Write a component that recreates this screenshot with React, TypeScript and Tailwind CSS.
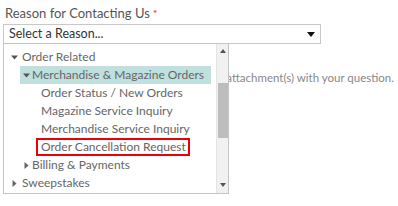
import React from 'react';

type Item = {
  label: string;
  level: 1 | 2 | 3;
  arrow?: 'down' | 'right';
  active?: boolean;
  boxed?: boolean;
};

const items: Item[] = [
  { label: 'Order Related', level: 1, arrow: 'down' },
  { label: 'Merchandise & Magazine Orders', level: 2, arrow: 'down', active: true },
  { label: 'Order Status / New Orders', level: 3 },
  { label: 'Magazine Service Inquiry', level: 3 },
  { label: 'Merchandise Service Inquiry', level: 3 },
  { label: 'Order Cancellation Request', level: 3, boxed: true },
  { label: 'Billing & Payments', level: 2, arrow: 'right' },
  { label: 'Sweepstakes', level: 1, arrow: 'right' },
];

function Arrow({ dir }: { dir: 'down' | 'right' }) {
  if (dir === 'down') {
    return (
      <svg width="7" height="5" viewBox="0 0 7 5" className="shrink-0">
        <path d="M0 0.5 L7 0.5 L3.5 4.5 Z" fill="#555" />
      </svg>
    );
  }
  return (
    <svg width="5" height="7" viewBox="0 0 5 7" className="shrink-0">
      <path d="M0.5 0 L4.5 3.5 L0.5 7 Z" fill="#666" />
    </svg>
  );
}

function Row({ item }: { item: Item }) {
  if (item.level === 1) {
    return (
      <div className="flex h-[18px] items-center">
        <div className="flex w-[18px] justify-center pl-[2px]">
          {item.arrow && <Arrow dir={item.arrow} />}
        </div>
        <span>{item.label}</span>
      </div>
    );
  }
  if (item.level === 2) {
    return (
      <div className="flex h-[18px] items-center pl-[16px]">
        <div
          className={
            'flex h-[18px] w-[191px] items-center ' +
            (item.active ? 'bg-[#bfe0de]' : '')
          }
        >
          <div className="flex w-[12px] justify-center">
            {item.arrow && <Arrow dir={item.arrow} />}
          </div>
          <span>{item.label}</span>
        </div>
      </div>
    );
  }
  return (
    <div className="flex h-[18px] items-center pl-[32px]">
      <div
        className={
          'flex h-[18px] items-center ' +
          (item.boxed ? 'border-2 border-[#e8000b] pl-[3px] pr-[2px]' : 'pl-[5px]')
        }
      >
        <span>{item.label}</span>
      </div>
    </div>
  );
}

export default function App() {
  return (
    <div className="relative h-[206px] w-[398px] overflow-hidden bg-white font-['Lato',sans-serif]">
      {/* Label */}
      <div className="pl-[5px] pt-[6px] text-[13px] leading-[15px] text-[#555]">
        Reason for Contacting Us <span className="align-top text-[10px] text-[#e8000b]">*</span>
      </div>

      {/* Select */}
      <div className="ml-[3px] mt-[3px] flex h-[20px] w-[318px] items-center justify-between border border-[#c8c8c8] pl-[5px] pr-[5px]">
        <span className="text-[12.5px] text-[#333]">Select a Reason...</span>
        <svg width="8" height="5" viewBox="0 0 8 5">
          <path d="M0 0 L8 0 L4 5 Z" fill="#111" />
        </svg>
      </div>

      {/* Underlying content */}
      <p className="mt-[26px] whitespace-nowrap pr-[4px] text-right text-[11.5px] leading-[16px] text-[#888]">
        Please upload any related attachment(s) with your question.
      </p>

      {/* Dropdown list */}
      <div className="absolute left-[3px] top-[43px] h-[151px] w-[226px] border border-[#c4c4c4] bg-white">
        <div className="whitespace-nowrap pt-[4px] text-[12px] text-[#666]">
          {items.map((item) => (
            <Row key={item.label} item={item} />
          ))}
        </div>

        {/* Scrollbar */}
        <div className="absolute bottom-0 right-0 top-0 flex w-[12px] flex-col items-center border-l border-[#e4e4e4] bg-[#f1f1f1]">
          <svg width="6" height="4" viewBox="0 0 6 4" className="mt-[5px]">
            <path d="M3 0 L6 4 L0 4 Z" fill="#555" />
          </svg>
          <div className="mt-[30px] h-[55px] w-[10px] bg-[#bdbdbd]" />
          <div className="flex-1" />
          <svg width="6" height="4" viewBox="0 0 6 4" className="mb-[6px]">
            <path d="M0 0 L6 0 L3 4 Z" fill="#555" />
          </svg>
        </div>
      </div>
    </div>
  );
}
